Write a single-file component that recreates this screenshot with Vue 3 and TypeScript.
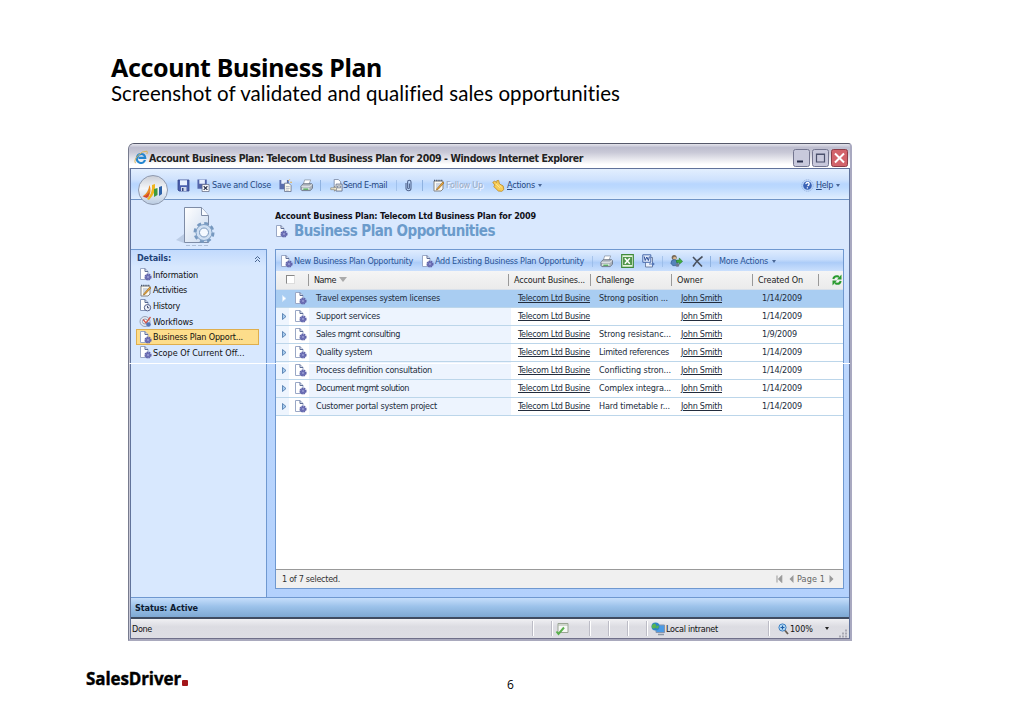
<script setup lang="ts">
interface Row {
  name: string
  nameW: number
  challenge: string
  challengeW: number
  date: string
  dateW: number
}

interface NavItem {
  icon: string
  label: string
  width: number
}

const nav: NavItem[] = [
  { icon: 'page-gear', label: 'Information', width: 45 },
  { icon: 'note', label: 'Activities', width: 34 },
  { icon: 'history', label: 'History', width: 27 },
  { icon: 'workflow', label: 'Workflows', width: 40 },
  { icon: 'page-gear', label: 'Business Plan Opport...', width: 90 },
  { icon: 'page-gear', label: 'Scope Of Current Off...', width: 92 },
]

const rows: Row[] = [
  { name: 'Travel expenses system licenses', nameW: 124, challenge: 'Strong position ...', challengeW: 69, date: '1/14/2009', dateW: 40 },
  { name: 'Support services', nameW: 64, challenge: '', challengeW: 0, date: '1/14/2009', dateW: 40 },
  { name: 'Sales mgmt consulting', nameW: 84, challenge: 'Strong resistanc...', challengeW: 72, date: '1/9/2009', dateW: 35 },
  { name: 'Quality system', nameW: 56, challenge: 'Limited references', challengeW: 70, date: '1/14/2009', dateW: 40 },
  { name: 'Process definition consultation', nameW: 116, challenge: 'Conflicting stron...', challengeW: 72, date: '1/14/2009', dateW: 40 },
  { name: 'Document mgmt solution', nameW: 93, challenge: 'Complex integra...', challengeW: 72, date: '1/14/2009', dateW: 40 },
  { name: 'Customer portal system project', nameW: 121, challenge: 'Hard timetable r...', challengeW: 71, date: '1/14/2009', dateW: 40 },
]

// Tracks a label out or in so that it takes up the given width.
const vFit = {
  mounted(el: HTMLElement, binding: { value: number }) {
    const count = (el.textContent ?? '').length
    if (!count || !binding.value) return
    const range = document.createRange()
    range.selectNodeContents(el)
    const natural = range.getBoundingClientRect().width
    el.style.letterSpacing = `${(binding.value - natural) / count}px`
  },
}
</script>

<template>
  <div class="slide">
    <svg class="defs" width="0" height="0">
      <defs>
        <linearGradient id="g-orb" x1="0" y1="0" x2="0" y2="1">
          <stop offset="0" stop-color="#c9cdd6" /><stop offset=".45" stop-color="#f4f6f9" /><stop offset="1" stop-color="#b9cbe2" />
        </linearGradient>
        <linearGradient id="g-page" x1="0" y1="0" x2="1" y2="1">
          <stop offset="0" stop-color="#fff" /><stop offset="1" stop-color="#c8d8ee" />
        </linearGradient>
        <symbol id="page-gear" viewBox="0 0 13 13">
          <path d="M1.500.5h4.500l3 3v8h-7.500z" fill="#fff" stroke="#9aa8c6" />
          <path d="M6 .5v3h3" fill="none" stroke="#5d6d97" />
          <circle cx="9" cy="9" r="2.600" fill="#7577bb" stroke="#6164ab" stroke-width="2" stroke-dasharray="1.500 .6" />
          <circle cx="9" cy="9" r=".9" fill="#9da1d6" />
        </symbol>
        <symbol id="note" viewBox="0 0 13 13">
          <path d="M2 2h9v8l-2 2H2z" fill="#fbfaf3" stroke="#858585" />
          <path d="M2 1.500h9" stroke="#46566f" stroke-width="1.600" stroke-dasharray="1.200 1" />
          <path d="M4 5h5M4 7h4M4 9h3" stroke="#8d9fc2" stroke-width=".8" />
          <path d="M5 9.500L10.800 3l1.200 1-5.800 6.300-1.800.7z" fill="#e9a53c" stroke="#8f6119" stroke-width=".6" />
        </symbol>
        <symbol id="history" viewBox="0 0 13 13">
          <path d="M1.500.5h4.500l3 3v8h-7.500z" fill="#fff" stroke="#8495b8" />
          <path d="M6 .5v3h3" fill="none" stroke="#53658f" />
          <circle cx="8.500" cy="8.700" r="3.200" fill="#eef2fb" stroke="#55618c" />
          <path d="M8.500 6.800v2h1.700" fill="none" stroke="#333c63" stroke-width=".9" />
        </symbol>
        <symbol id="workflow" viewBox="0 0 13 13">
          <circle cx="6" cy="6.500" r="5" fill="#e3e8f2" stroke="#96a2b9" />
          <circle cx="6" cy="6.500" r="2.500" fill="#fff" stroke="#8d9ab5" />
          <path d="M4 4.500l3 3.500 4.500-6" fill="none" stroke="#d2574a" stroke-width="1.300" />
          <circle cx="9.500" cy="9.500" r="2.300" fill="#5474b4" />
        </symbol>
        <symbol id="save" viewBox="0 0 13 13">
          <path d="M1 1h11v11H2L1 11z" fill="#4a5fae" stroke="#35468c" stroke-width=".8" />
          <path d="M3 1.200h7v5H3z" fill="#e6efff" /><path d="M4 8h5.500v4H4z" fill="#cdd6ea" /><path d="M5 9h1.500v3H5z" fill="#34447e" />
        </symbol>
        <symbol id="save-close" viewBox="0 0 14 14">
          <path d="M.5.500h10v10H.500z" fill="#5366aa" /><path d="M2.500.800h6v4.200h-6z" fill="#e6efff" />
          <path d="M5.500 6h7.500v7.500H5.500z" fill="#fff" stroke="#5f6780" stroke-width=".8" />
          <path d="M7.200 7.800l4 4M11.200 7.800l-4 4" stroke="#28304a" stroke-width="1.200" />
        </symbol>
        <symbol id="save-new" viewBox="0 0 14 14">
          <path d="M.5 1h10v10H.500z" fill="#5a6dad" /><path d="M2.500 1.200h6v4h-6z" fill="#e6efff" />
          <path d="M6 4.500h4.500l2.500 2.500v6.500H6z" fill="#fffdf1" stroke="#68728e" stroke-width=".9" />
          <path d="M7.500 8h4M7.500 10h4M7.500 12h3" stroke="#8e98ae" stroke-width=".7" />
          <path d="M10 2l1.500-1.500M12 3.500h2" stroke="#e6a93b" />
        </symbol>
        <symbol id="print" viewBox="0 0 14 14">
          <path d="M5 1h6.500L9.500 6H3.500z" fill="#fff" stroke="#8a93a2" stroke-width=".8" />
          <path d="M1 7.500L3.500 5h9l1 1v4L11 12.500H2L1 11.500z" fill="#aab1bb" stroke="#5f6877" stroke-width=".8" />
          <path d="M1.500 7.800h9.300l2.300-2" fill="none" stroke="#f1f3f6" /><path d="M2.500 9.500h7.500v2.200H2.500z" fill="#eef7ee" /><path d="M3.500 11h5.500" stroke="#3e9b49" stroke-width="1.300" />
        </symbol>
        <symbol id="mail" viewBox="0 0 14 14">
          <path d="M4.500.500h4.500l2.500 2.500v8H4.500z" fill="#fff" stroke="#7785a2" stroke-width=".9" />
          <path d="M6.500 5.500h6.500v7.500H6.500z" fill="#f6f4ea" stroke="#5d6a88" stroke-width=".9" /><path d="M8 7.500h3.500v2H8z" fill="none" stroke="#5d6a88" stroke-width=".8" />
          <path d="M.8 9.500h4V7.800L7.300 10.500l-2.500 2.700V11.500h-4z" fill="#f4ecd2" stroke="#6e6a5e" stroke-width=".6" />
        </symbol>
        <symbol id="clip" viewBox="0 0 9 13">
          <path d="M2 4v5.200a2.500 2.500 0 005 0V3a1.700 1.700 0 00-3.400 0v5.800a.9.9 0 001.800 0V4.500" fill="none" stroke="#53678f" stroke-width="1.100" />
        </symbol>
        <symbol id="hand" viewBox="0 0 14 14">
          <path d="M.8 3.500L3 2.300l2 1.500.2-2 2-.3.800 3.800 4 2.200.800 3.800-2.300 2-3.700-.4L1.800 8l1.400-1.200z" fill="#f7cd58" stroke="#c08c22" stroke-width=".9" />
          <path d="M4.500 5.500l4 4M8 6.500l2.500 2.500" stroke="#fff0a8" stroke-width=".8" />
        </symbol>
        <symbol id="help" viewBox="0 0 13 13">
          <circle cx="6.500" cy="6.500" r="5.700" fill="none" stroke="#8fa9d6" stroke-width=".8" stroke-dasharray="1.500 .7" />
          <circle cx="6.500" cy="6.500" r="4.300" fill="#3a62b5" />
          <path d="M5 5.200a1.600 1.400 0 113 .3q-.2.800-1.500 1.500M6.400 8.200v1.200" fill="none" stroke="#fff" stroke-width="1.300" />
        </symbol>
        <symbol id="excel" viewBox="0 0 13 14">
          <path d="M.7.700h11.600v12.600H.700z" fill="#e5f3dd" stroke="#3f8a3b" stroke-width="1.200" />
          <path d="M2 3h9v8H2z" fill="#51964c" /><path d="M3.800 4.200l5 5.600M8.800 4.200l-5 5.600" stroke="#fff" stroke-width="1.500" />
        </symbol>
        <symbol id="word" viewBox="0 0 13 14">
          <path d="M3.500 3.500h7v9.500h-7z" fill="#eaf0fb" stroke="#66789d" stroke-width=".9" />
          <path d="M.800.800h8v7.500h-8z" fill="#dfe9fa" stroke="#4668ab" />
          <path d="M2.200 2.500l1 4 1.600-3.500 1.600 3.500 1-4" fill="none" stroke="#2f4f98" stroke-width="1" />
          <path d="M7 9.500h3V7.500L12.800 10 10 12.500v-2H7z" fill="#5576b5" />
        </symbol>
        <symbol id="assign" viewBox="0 0 14 14">
          <circle cx="4.500" cy="3.200" r="2.700" fill="#75695a" /><circle cx="5" cy="4" r="1.600" fill="#d9b78c" />
          <path d="M1 9.500q0-4 3.500-4t4 4l-1 2.500H3z" fill="#5583bb" stroke="#365f91" stroke-width=".7" />
          <circle cx="8" cy="11.300" r="2" fill="#6e7890" />
          <path d="M7 6h3V3.700L13.500 7.500 10 10.500V8.500H7z" fill="#43ae40" stroke="#21772b" stroke-width=".6" />
        </symbol>
        <symbol id="delete" viewBox="0 0 12 13">
          <path d="M1.500 2L10.500 11.500M11 1.500Q5 5.500 1.500 11.500" fill="none" stroke="#4a505c" stroke-width="1.600" />
        </symbol>
        <symbol id="refresh" viewBox="0 0 10 12">
          <path d="M1.300 5Q2 1.700 5.500 2.200L7 3" fill="none" stroke="#2a9b2f" stroke-width="2" /><path d="M9.500.500v5H5z" fill="#2a9b2f" />
          <path d="M8.700 7Q8 10.300 4.500 9.800L3 9" fill="none" stroke="#2a9b2f" stroke-width="2" /><path d="M.5 11.500v-5H5z" fill="#2a9b2f" />
        </symbol>
        <symbol id="ie" viewBox="0 0 14 14">
          <path d="M11 10A4 4 0 113 7.500q.6-3.500 4.200-3.500t4 3.800H4.500" fill="none" stroke="#2386d0" stroke-width="2.200" />
          <path d="M1.500 13.200Q-.5 10.500 4 5.500T13 1.200q.8.800-.2 2.800" fill="none" stroke="#d9b558" stroke-width="1" />
        </symbol>
      </defs>
    </svg>

    <header class="heading">
      <h1><span v-fit="271">Account Business Plan</span></h1>
      <p><span v-fit="509">Screenshot of validated and qualified sales opportunities</span></p>
    </header>

    <main class="window">
      <div class="titlebar">
        <svg class="ie"><use href="#ie" /></svg>
        <span v-fit="434" class="wtitle">Account Business Plan: Telecom Ltd Business Plan for 2009 - Windows Internet Explorer</span>
        <div class="wbtns">
          <svg viewBox="0 0 17 18"><rect x=".5" y=".5" width="16" height="17" rx="2" class="wb" /><path d="M4 12.500h6" stroke="#29304d" stroke-width="2" /></svg>
          <svg viewBox="0 0 17 18"><rect x=".5" y=".5" width="16" height="17" rx="2" class="wb" /><path d="M4.500 5h8v8h-8zM4.500 5.500h8" fill="none" stroke="#4b516c" stroke-width="1.200" /></svg>
          <svg viewBox="0 0 17 18"><rect x=".5" y=".5" width="16" height="17" rx="2" class="wb red" /><path d="M4 4.500l9 9M13 4.500l-9 9" stroke="#fff" stroke-width="2" /></svg>
        </div>
      </div>

      <div class="client">
        <div class="toolbar">
          <svg class="orb" viewBox="0 0 32 32">
            <circle cx="16" cy="16" r="14.500" fill="url(#g-orb)" stroke="#8e99ae" />
            <path d="M6 22q5-3 6.500-11 2.500 6-1 12z" fill="#e68b24" /><path d="M5.500 22.500q4-.5 7-4.500-1 5-2.500 6z" fill="#d6452c" />
            <path d="M10 25q5.500-5 5-14l3-1q1 9-6 16z" fill="#f0b51e" />
            <path d="M17 23v-8l3.500-1v7z" fill="#3f9a3d" /><path d="M22 22v-9l3-1v8z" fill="#2e62a8" />
          </svg>
          <svg class="i"><use href="#save" /></svg>
          <svg class="i"><use href="#save-close" /></svg>
          <span v-fit="59">Save and Close</span>
          <svg class="i"><use href="#save-new" /></svg>
          <svg class="i"><use href="#print" /></svg>
          <i class="sep" />
          <svg class="i"><use href="#mail" /></svg>
          <span v-fit="44">Send E-mail</span>
          <i class="sep faint" />
          <svg class="i clip"><use href="#clip" /></svg>
          <i class="sep" />
          <svg class="i"><use href="#note" /></svg>
          <span v-fit="37" class="off">Follow Up</span>
          <svg class="i"><use href="#hand" /></svg>
          <span v-fit="28"><u>A</u>ctions</span>
          <i class="caret" />
          <svg class="i"><use href="#help" /></svg>
          <span v-fit="17"><u>H</u>elp</span>
          <i class="caret" />
        </div>

        <div class="banner">
          <svg class="big" viewBox="0 0 42 42">
            <path d="M2 35l8-6v9z" fill="#a9bad6" opacity=".6" />
            <path d="M10.500 2.500h17l7 8v27h-24z" fill="url(#g-page)" stroke="#7e8ca6" />
            <path d="M27.500 2.500v8h7" fill="#f8fbff" stroke="#7e8ca6" />
            <circle cx="30" cy="27.500" r="8.500" fill="#dbe8f6" stroke="#7698bf" stroke-width="4" stroke-dasharray="3.700 2.970" />
            <circle cx="30" cy="27.500" r="8" fill="#cfdff2" stroke="#7e9fc5" /><circle cx="30" cy="27.500" r="4.500" fill="#f4f9ff" stroke="#7a98bd" />
            <path d="M12 40.500h24" stroke="#91a4c2" stroke-dasharray="4 2" opacity=".6" />
          </svg>
          <div class="btext">
            <div v-fit="261" class="crumb">Account Business Plan: Telecom Ltd Business Plan for 2009</div>
            <div class="btitle"><svg class="i"><use href="#page-gear" /></svg><span v-fit="201">Business Plan Opportunities</span></div>
          </div>
        </div>

        <div class="body">
          <nav class="side">
            <div class="shead">
              <span v-fit="34">Details:</span>
              <svg viewBox="0 0 7 8"><path d="M1 4l2.500-2.500L6 4M1 7l2.500-2.500L6 7" fill="none" stroke="#48648f" /></svg>
            </div>
            <div v-for="(n, i) in nav" :key="n.label" class="nitem" :class="{ on: i === 4 }">
              <svg class="i"><use :href="'#' + n.icon" /></svg><span v-fit="n.width">{{ n.label }}</span>
            </div>
          </nav>

          <section class="panel">
            <div class="gbar">
              <svg class="i"><use href="#page-gear" /></svg>
              <span v-fit="119">New Business Plan Opportunity</span>
              <svg class="i"><use href="#page-gear" /></svg>
              <span v-fit="149">Add Existing Business Plan Opportunity</span>
              <i class="sep faint" />
              <svg class="i"><use href="#print" /></svg>
              <svg class="i tall"><use href="#excel" /></svg>
              <svg class="i tall"><use href="#word" /></svg>
              <i class="sep faint" />
              <svg class="i tall"><use href="#assign" /></svg>
              <svg class="i"><use href="#delete" /></svg>
              <i class="sep" />
              <span v-fit="49">More Actions</span>
              <i class="caret" />
            </div>
            <div class="ghead">
              <div class="check"><i /></div>
              <div><span v-fit="22">Name</span><b class="sort" /></div>
              <div><span v-fit="71">Account Busines...</span></div>
              <div><span v-fit="38">Challenge</span></div>
              <div><span v-fit="26">Owner</span></div>
              <div><span v-fit="45">Created On</span></div>
              <div class="last"><svg><use href="#refresh" /></svg></div>
            </div>
            <div v-for="(r, i) in rows" :key="r.name" class="row" :class="{ sel: i === 0 }">
              <div class="exp"><svg viewBox="0 0 5 7"><path d="M.5.500v6l3.500-3z" /></svg></div>
              <div class="ric"><svg class="i"><use href="#page-gear" /></svg></div>
              <div class="nm"><span v-fit="r.nameW">{{ r.name }}</span></div>
              <div><span v-fit="72" class="lnk">Telecom Ltd Busine</span></div>
              <div><span v-fit="r.challengeW">{{ r.challenge }}</span></div>
              <div><span v-fit="41" class="lnk">John Smith</span></div>
              <div><span v-fit="r.dateW">{{ r.date }}</span></div>
            </div>
            <div class="gfoot">
              <span v-fit="58">1 of 7 selected.</span>
              <div class="pager">
                <svg class="first" viewBox="0 0 7 8"><path d="M1 .5v7M5.800.500v7L2.500 4z" fill="#999" stroke="#999" /></svg>
                <svg class="tri" viewBox="0 0 5 8"><path d="M4.500 0v8L.500 4z" fill="#999" /></svg>
                <span v-fit="28">Page 1</span>
                <svg class="tri" viewBox="0 0 5 8"><path d="M.5 0v8l4-4z" fill="#999" /></svg>
              </div>
            </div>
          </section>
        </div>
        <div class="status"><span v-fit="63">Status: Active</span></div>
        <div class="iebar">
          <span v-fit="20" class="done">Done</span>
          <div class="cell" />
          <div class="cell chk">
            <svg viewBox="0 0 14 14"><path d="M3 1.500h10v9H3z" fill="#f7f8f6" stroke="#9aa594" /><path d="M3 3h10" stroke="#a9b4a4" /><path d="M1.500 9.500l2 2.500L9 5.500" fill="none" stroke="#59b04c" stroke-width="2" /></svg>
          </div>
          <div class="cell" /><div class="cell" /><div class="cell" />
          <div class="cell zone">
            <svg viewBox="0 0 14 14"><path d="M5 3h8.500v7.500H5z" fill="#4c9be5" stroke="#8695ad" /><path d="M7 12.500h6" stroke="#8c98a8" stroke-width="1.500" /><circle cx="4.500" cy="4.500" r="4" fill="#2c85c6" /><path d="M1 3q3-3 4 0T3 6.500 1 3M5 5l2-2 1 2-2 2z" fill="#55b453" /></svg>
            <span v-fit="52">Local intranet</span>
          </div>
          <div class="cell zoom">
            <svg viewBox="0 0 11 12"><circle cx="4.500" cy="4.500" r="3.600" fill="#b9dcf5" stroke="#3a7fc3" /><path d="M4.500 2.500v4M2.500 4.500h4" stroke="#1d5ca6" stroke-width="1.200" /><path d="M7 7.500l3 3.500" stroke="#665d54" stroke-width="1.800" /></svg>
            <span v-fit="23">100%</span><i class="caret dark" />
          </div>
          <svg class="grip" viewBox="0 0 9 9"><path d="M6 1.500h2M3 4.500h2M6 4.500h2M0 7.500h2M3 7.500h2M6 7.500h2" stroke="#a9a9b3" stroke-width="2" /></svg>
        </div>
      </div>
      <i class="seam" />
    </main>

    <footer class="foot">
      <div class="logo"><span v-fit="95">SalesDriver</span><i /></div>
      <div class="num">6</div>
    </footer>
  </div>
</template>

<style>
body { background: #fff; }
</style>

<style scoped>
* { box-sizing: border-box; }
.slide { width: 1030px; height: 728px; overflow: hidden; background: #fff; color: #111; font: 9px/12px "DejaVu Sans Condensed", "Noto Sans", sans-serif; white-space: nowrap; }
.defs { position: absolute; }
svg { display: block; flex: none; }
span { display: block; }
i, b { display: block; flex: none; }
.heading { height: 143px; padding: 52px 0 0 111px; font-family: Lato, "Open Sans", sans-serif; color: #000; }
h1 { margin: 0; font: 700 25px/30px "Noto Sans", "Open Sans", sans-serif; }
.heading p { margin: 0; font-size: 20.500px; line-height: 22px; }

.window { position: relative; width: 724px; height: 498px; margin-left: 128px; border: 1px solid #777b8e; border-bottom: 2px solid #a9a9bd; border-right: 2px solid #a9a9c0; border-top-color: #55586a; border-radius: 6px 4px 0 0; background: #c8c8d6; overflow: hidden; display: flex; flex-direction: column; }
.titlebar { height: 24px; display: flex; align-items: center; padding: 3px 0 0 4px; background: linear-gradient(#e4e4ec 0, #bdbdcf 15%, #c9c9d7 35%, #fff 85%, #fff); }
.ie { width: 14px; height: 14px; margin: 0 1px 1px 1px; }
.wtitle { font: 700 10.500px/14px "DejaVu Sans Condensed", sans-serif; color: #222; }
.wbtns { margin-left: auto; display: flex; gap: 2px; padding-right: 2px; }
.wbtns svg { width: 17px; height: 18px; }
.wb { fill: #c8c9dc; stroke: #73758f; }
.wb.red { fill: #d2636a; stroke: #8b3c47; }

.client { width: 720px; flex: 1; margin-left: 1px; border: 1px solid #61739b; border-bottom-color: #70708a; display: flex; flex-direction: column; background: #d8e7fd; }
.i { width: 13px; height: 13px; }
.i.tall { height: 14px; }
.sep { width: 1px; height: 11px; background: #8fb2e0; justify-self: start; }
.sep.faint { opacity: .6; }
.caret { width: 0; height: 0; border: 2px solid transparent; border-top: 3px solid #4a6796; border-bottom: 0; }
.caret.dark { border-top-color: #222; }
.toolbar { height: 31px; flex: none; display: grid; align-items: center; padding: 0 0 1px 6px; color: #26477f; border-bottom: 1px solid #6f94c6; background: linear-gradient(#e3effe 0, #cfe2fd 35%, #b8d6fe 50%, #bcd9fe 62%, #e0eefe); grid-template-columns: 40px 20px 15px 67px 21px 20px 10px 13px 53px 8px 18px 10px 14px 46px 15px 31px 263px 15px 20px 6px; }
.orb { width: 32px; height: 32px; position: relative; top: 5px; }
.clip { width: 9px; }
.off { color: #9cabc2; text-shadow: 1px 1px #f4f8ff; }
.banner { height: 49px; flex: none; display: flex; background: #d9e8fe; }
.big { width: 42px; height: 42px; margin: 5px 0 0 43px; }
.btext { margin-left: 59px; padding-top: 10px; }
.crumb { font-weight: 700; line-height: 13px; color: #101018; }
.btitle { display: flex; align-items: center; gap: 6px; height: 17px; color: #6b9bcb; font: 700 15px/17px "DejaVu Sans Condensed", sans-serif; }

.body { flex: 1; min-height: 0; display: flex; background: linear-gradient(#d8e7fd, #bcd7fe 35%, #b3d1fd); padding-bottom: 8px; }
.side { width: 136px; margin-bottom: -8px; border-top: 1px solid #6f98d0; border-right: 1px solid #6f98d0; background: #d8e8fe; }
.shead { height: 17px; display: flex; justify-content: space-between; align-items: center; padding: 0 5px 2px 6px; font-weight: 700; color: #1f4379; background: linear-gradient(#c2dafd, #d8e8fe); }
.shead svg { width: 7px; height: 8px; position: relative; top: 1px; }
.nitem { width: 123px; height: 15.600px; margin-left: 5px; padding-left: 2px; display: flex; align-items: center; gap: 1px; border: 1px solid transparent; }
.nitem.on { background: #fddd8b; border-color: #dfae4d; }
.panel { width: 569px; margin-left: 8px; border: 1px solid #6f98d0; background: #fff; display: flex; flex-direction: column; }
.gbar { height: 21px; flex: none; display: grid; align-items: center; padding: 1px 0 0 4px; color: #2b5596; background: linear-gradient(#dfecfe, #c5dcfc 45%, #acccf8 60%, #cbe0fd); grid-template-columns: 14px 127px 14px 157px 8px 21px 21px 20px 8px 21px 19px 9px 53px 6px; }
.ghead { height: 19px; flex: none; display: grid; grid-template-columns: 33px 200px 82px 81px 81px 66px 25px; background: linear-gradient(#f5f5f5, #ebebeb); border-bottom: 1px solid #d8e0ea; color: #222; }
.ghead > div { display: flex; align-items: center; padding: 0 0 1px 5px; position: relative; }
.ghead > div:not(.last)::after { content: ""; position: absolute; right: 0; top: 3px; height: 12px; border-right: 1px solid #999; }
.ghead > .check { padding-left: 10px; }
.ghead > .last svg { width: 10px; height: 12px; margin-left: 8px; }
.check i { width: 9px; height: 9px; border: 1px solid #888; border-right-color: #ddd; border-bottom-color: #ddd; background: #fff; }
.sort { border: 4px solid transparent; border-top: 5px solid #aaa; border-bottom: 0; margin-left: 3px; }
.row { height: 18px; flex: none; display: grid; grid-template-columns: 13px 20px 202px 81px 82px 81px 1fr; border-bottom: 1px solid #bcd6ea; color: #222c3c; }
.row > div { display: flex; align-items: center; padding: 0 0 1px 7px; }
.row > .exp { padding-left: 6px; background: #eef5fe; }
.exp svg { width: 5px; height: 7px; fill: #a9cdef; stroke: #4673a8; stroke-width: .8; }
.row > .ric { padding: 0 0 0 5px; }
.row > .nm { background: #edf4fe; }
.row.sel, .row.sel > div { background: #a9cdf2; }
.sel .exp svg { fill: #fff; stroke: #d7e8fa; }
.lnk { text-decoration: underline; text-underline-offset: 1px; }
.gfoot { margin-top: auto; height: 19px; flex: none; display: flex; justify-content: space-between; align-items: center; padding: 0 9px 0 6px; background: #f0f0f0; border-top: 1px solid #999; color: #333; }
.pager { display: flex; align-items: center; color: #666; }
.first { width: 7px; height: 8px; margin-right: 6px; }
.tri { width: 5px; height: 8px; }
.pager span { margin: 0 4px 0 3px; }

.status { height: 20px; flex: none; padding: 4px 0 0 4px; font-weight: 700; color: #0b1a30; border-top: 1px solid #6f98d0; background: linear-gradient(#c6defb, #9cc2ea 45%, #7ea8d3); }
.iebar { height: 21px; flex: none; display: grid; align-items: center; grid-template-columns: 401px 19px 38px 19px 19px 19px 122px 71px 9px; border-top: 2px solid #3f4b60; background: linear-gradient(#f0f0f3, #dcdce2 40%, #dedee4); color: #111; }
.done { padding-left: 1px; }
.cell { height: 15px; border-left: 1px solid #bcbcc6; box-shadow: inset 1px 0 #fff; display: flex; align-items: center; }
.chk { padding-left: 3px; }
.cell svg { width: 14px; height: 14px; }
.zone { padding-left: 4px; }
.zone span { margin-left: 1px; }
.zoom { padding-left: 9px; }
.cell.zoom svg { width: 11px; height: 12px; margin-right: 1px; }
.zoom .caret { margin-left: 12px; }
.grip { width: 9px; height: 9px; align-self: end; }
.seam { position: absolute; left: 0; right: 0; top: 219px; height: 1px; background: #fff; }

.foot { height: 87px; position: relative; padding: 28px 0 0 86px; }
.logo { display: flex; font: 700 17px/20px "Open Sans", sans-serif; color: #000; -webkit-text-stroke: .4px #000; }
.logo i { width: 6px; height: 6px; background: #a3161a; border-radius: 1px; margin: 11px 0 0 1px; }
.num { position: absolute; left: 507px; top: 36px; font: 12px/16px "Open Sans", sans-serif; color: #000; }
</style>
